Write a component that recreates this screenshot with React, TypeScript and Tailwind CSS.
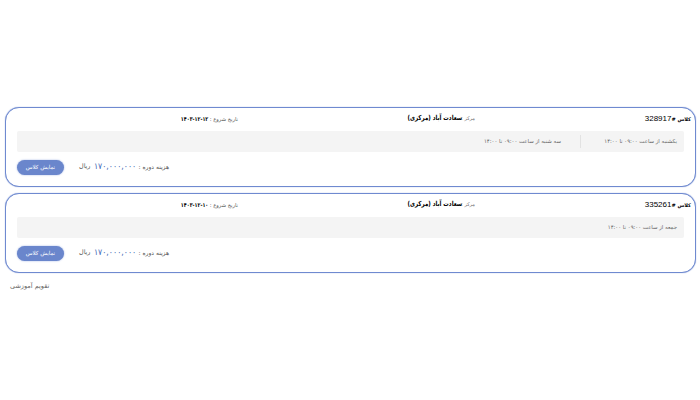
const FONT = 'font-["DejaVu_Sans","Liberation_Sans",sans-serif]'

type ClassItem = {
  id: string
  date: string
  sessions: string[]
}

const classes: ClassItem[] = [
  {
    id: '328917',
    date: '۱۴۰۳-۱۲-۱۲',
    sessions: ['یکشنبه از ساعت ۰۹:۰۰ تا ۱۴:۰۰', 'سه شنبه از ساعت ۰۹:۰۰ تا ۱۴:۰۰'],
  },
  {
    id: '335261',
    date: '۱۴۰۳-۱۲-۱۰',
    sessions: ['جمعه از ساعت ۰۹:۰۰ تا ۱۴:۰۰'],
  },
]

function ClassCard({ item }: { item: ClassItem }) {
  return (
    <div className="h-[80px] rounded-[14px] border border-[#6f8ad0] bg-white pt-[5px] pr-[4px] pl-[11px] shadow-[0_0_1px_#6f8ad0]">
      {/* header */}
      <div className="flex h-[11px] items-center">
        <div className="w-[216px] shrink-0 text-[5px] leading-[11px] font-bold text-black">
          کلاس #<span className="font-['Liberation_Sans'] text-[8px] font-normal">{item.id}</span>
        </div>
        <div className="w-[237px] shrink-0 text-[5px] leading-[11px] text-[#666]">
          مرکز :
          <span className="mr-[-1px] inline-block origin-right scale-x-[0.78] text-[7px] font-bold text-black">
            سعادت آباد (مرکزی)
          </span>
        </div>
        <div className="text-[5.2px] leading-[11px] text-[#555]">
          تاریخ شروع :{' '}
          <span dir="ltr" className="inline-block origin-right scale-x-[0.8] text-[6px] font-bold text-black">
            {item.date}
          </span>
        </div>
      </div>

      {/* sessions */}
      <div className="mt-[7px] mr-[7px] flex h-[21px] items-center rounded-[2px] bg-[#f4f4f4] pr-[7px]">
        {item.sessions.map((s, i) => (
          <div
            key={s}
            className={
              i === 0 && item.sessions.length > 1
                ? 'h-[13px] w-[97px] border-l border-[#e2e2e2] text-[5.4px] leading-[13px] text-[#666]'
                : 'pr-[19px] text-[5.4px] leading-[13px] text-[#666] first:pr-0'
            }
          >
            {s}
          </div>
        ))}
      </div>

      {/* footer */}
      <div className="mt-[8px] mr-[7px] flex h-[15px] items-center justify-end gap-[15px]">
        <div className="mb-[2px] flex items-center text-[6px] text-[#555]">
          <span>هزینه دوره :</span>
          <span className="mr-[2px] w-[43px] whitespace-nowrap">
            <span className="inline-block origin-right scale-x-[0.86] text-[9px] text-[#3f66b5]">۱۷۰,۰۰۰,۰۰۰</span>
          </span>
          <span className="mr-[3px] text-[6.4px]">ریال</span>
        </div>
        <button className="h-[15px] w-[47px] rounded-full bg-[#6a86cc] text-[5.5px] text-white shadow-[0_0_2px_#9fb2e2]">
          نمایش کلاس
        </button>
      </div>
    </div>
  )
}

export default function App() {
  return (
    <div dir="rtl" className={`${FONT} h-[400px] w-[700px] overflow-hidden bg-white pt-[107px] pr-[4px] pl-[5px]`}>
      <div className="flex flex-col gap-[6px]">
        {classes.map((c) => (
          <ClassCard key={c.id} item={c} />
        ))}
      </div>
      <div className="mt-[8px] pl-[5px] text-left text-[6.5px] leading-[10px] text-[#666]">تقویم آموزشی</div>
    </div>
  )
}
